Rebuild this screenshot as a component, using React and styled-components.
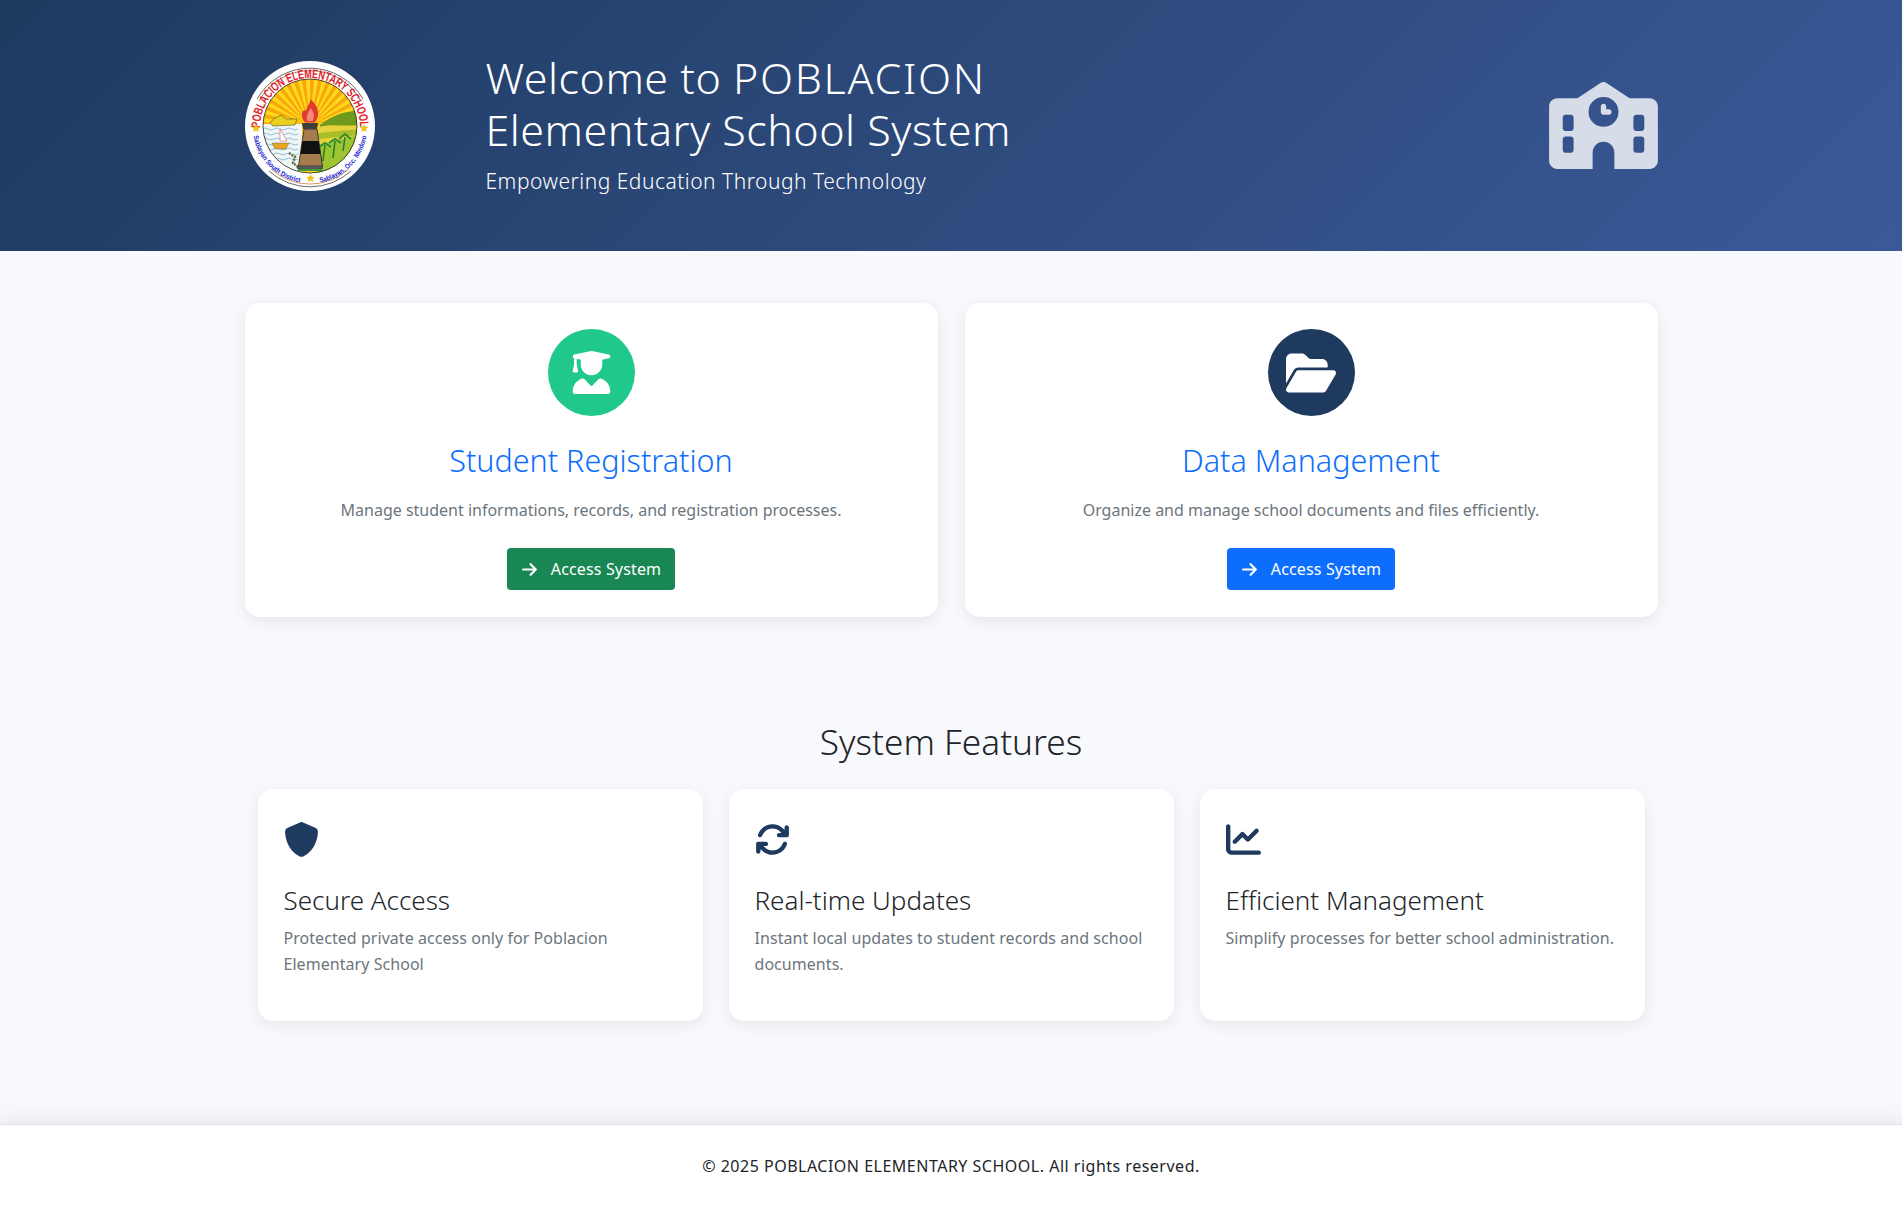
import React from 'react';
import styled, { createGlobalStyle } from 'styled-components';
import { FaSchool, FaUserGraduate, FaFolderOpen, FaArrowRight, FaShield, FaArrowsRotate, FaChartLine } from 'react-icons/fa6';

const GlobalStyle = createGlobalStyle`
  * { box-sizing: border-box; }
  body {
    margin: 0;
    background: #f8f9fc;
    color: #212529;
    font-family: "Noto Sans", "Open Sans", sans-serif;
    font-size: 16px;
    line-height: 1.6;
  }
`;

const Page = styled.div`
  min-height: 100vh;
  display: flex;
  flex-direction: column;
`;

const Header = styled.header`
  height: 251px;
  background: linear-gradient(135deg, #1e3a5f, #3b5998);
  color: #fff;
  display: flex;
  justify-content: center;
  align-items: center;
`;

const HeaderInner = styled.div`
  width: 1413px;
  display: flex;
  align-items: center;
`;

const LogoWrap = styled.div`
  width: 241px;
  flex-shrink: 0;
`;

const Logo = styled.svg`
  display: block;
  width: 130px;
  height: 130px;
`;

const HeaderText = styled.div`
  flex: 1;
`;

const Title = styled.h1`
  margin: 0 0 10px;
  font-size: 43px;
  font-weight: 300;
  line-height: 1.2;
  letter-spacing: 0.5px;
`;

const TitleCaps = styled.span`
  letter-spacing: 1.7px;
`;

const Lead = styled.p`
  margin: 0;
  font-size: 21px;
  font-weight: 300;
  letter-spacing: 0.5px;
`;

const SchoolIcon = styled(FaSchool)`
  width: 109px;
  height: 87px;
  opacity: 0.8;
`;

const Main = styled.main`
  width: 1413px;
  margin: 0 auto;
  padding-top: 52px;
`;

const SystemRow = styled.div`
  display: grid;
  grid-template-columns: 693px 693px;
  gap: 27px;
`;

const SystemCard = styled.section`
  background: #fff;
  border-radius: 15px;
  box-shadow: 0 4px 15px rgba(0, 0, 0, 0.08);
  padding: 26px;
  height: 314px;
  text-align: center;
`;

const IconCircle = styled.div`
  width: 87px;
  height: 87px;
  margin: 0 auto 26px;
  border-radius: 50%;
  background: ${(p) => p.$bg};
  color: #fff;
  display: flex;
  align-items: center;
  justify-content: center;
`;

const CardTitle = styled.h2`
  margin: 0 0 19px;
  font-size: 30.5px;
  font-weight: 300;
  line-height: 1.2;
  color: #0d6efd;
`;

const CardText = styled.p`
  margin: 0 0 25px;
  color: #6c757d;
  font-size: 16px;
`;

const AccessButton = styled.a`
  display: flex;
  width: fit-content;
  margin: 0 auto;
  align-items: center;
  gap: 13px;
  height: 42px;
  padding: 1px 14px 0;
  border-radius: 4px;
  background: ${(p) => p.$bg};
  color: #fff;
  font-size: 16px;
  letter-spacing: 0.15px;
`;

const SectionTitle = styled.h3`
  margin: 103px 0 27px;
  text-align: center;
  font-size: 35.2px;
  font-weight: 300;
  line-height: 1.2;
`;

const FeatureRow = styled.div`
  display: grid;
  grid-template-columns: repeat(3, 445px);
  justify-content: center;
  gap: 26px;
`;

const FeatureCard = styled.section`
  height: 232px;
  padding: 26px;
  background: #fff;
  border-radius: 15px;
  box-shadow: 0 4px 15px rgba(0, 0, 0, 0.08);
`;

const FeatureIcon = styled.div`
  color: #1e3a5f;
  font-size: 35px;
  height: 48px;
  display: flex;
  align-items: center;
  margin-bottom: 22px;
`;

const FeatureTitle = styled.h4`
  margin: 0 0 10px;
  font-size: 26px;
  font-weight: 300;
  line-height: 1.2;
`;

const FeatureText = styled.p`
  margin: 0;
  font-size: 16px;
  color: #6c757d;
  letter-spacing: 0.05px;
`;

const Footer = styled.footer`
  flex: 1;
  margin-top: 103px;
  padding-top: 3px;
  background: #fff;
  border-top: 1px solid #e2e4ea;
  box-shadow: 0 -2px 20px rgba(0, 0, 0, 0.1);
  display: flex;
  align-items: center;
  justify-content: center;
  font-size: 16px;
  letter-spacing: 0.5px;
`;

const rays = Array.from({ length: 18 }, (_, i) => {
  const a = Math.PI + (i * Math.PI) / 18;
  const b = a + Math.PI / 36;
  const p = (t) => `${(65 + 70 * Math.cos(t)).toFixed(1)} ${(65 + 70 * Math.sin(t)).toFixed(1)}`;
  return `M65 65 L${p(a)} L${p(b)} Z`;
});

const waves = [68, 73, 78, 83, 88, 93, 98];

const SchoolLogo = () => (
  <Logo viewBox="0 0 130 130">
    <defs>
      <clipPath id="sceneClip"><circle cx="65" cy="65" r="47" /></clipPath>
    </defs>
    <circle cx="65" cy="65" r="65" fill="#fff" />
    <path d="M14 40 A58 58 0 0 1 116 40" fill="none" stroke="#8a5a3c" strokeWidth="0.8" />
    <path d="M12 38 A61 61 0 0 1 118 38" fill="none" stroke="#444" strokeWidth="0.8" />
    <path d="M26 108 A58 58 0 0 0 104 108" fill="none" stroke="#c9803a" strokeWidth="0.8" />
    <path d="M24 110 A61 61 0 0 0 106 110" fill="none" stroke="#444" strokeWidth="0.8" />
    <g clipPath="url(#sceneClip)">
      <rect x="15" y="15" width="100" height="100" fill="#ffd91a" />
      {rays.map((d) => <path key={d} d={d} fill="#f8a70f" />)}
      <path d="M75 64 C88 54 100 50 114 50 V115 H75 Z" fill="#6f9a1e" />
      <path d="M73 66 C88 62 100 66 114 64 V115 H73 Z" fill="#e6d23a" />
      <path d="M73 72 L114 68 V74 L73 78 Z" fill="#a8bf2a" />
      <path d="M72 84 L114 74 V115 H72 Z" fill="#9cc531" />
      <path d="M78 100 L80 84 M88 97 L90 80 M98 90 L100 76" stroke="#2f7d2a" strokeWidth="1.6" fill="none" />
      <path d="M74 86 L80 82 L86 86 M84 82 L90 78 L96 82 M94 78 L100 73 L106 78" stroke="#2f8f32" strokeWidth="2" fill="none" />
      <rect x="15" y="63" width="42" height="52" fill="#eef5f4" />
      {waves.map((y) => (
        <path key={y} d={`M17 ${y} q3 -2 6 0 t6 0 t6 0 t6 0 t6 0 t6 0`} stroke="#5aa0cf" strokeWidth="0.6" fill="none" />
      ))}
      <path d="M25 62 C28 57 33 56 36 54 L41 58 L52 58 L50 64 L28 65 Z" fill="#e9d01f" stroke="#3a3a1a" strokeWidth="0.5" />
      <path d="M35 68 V80 L42 80 Z" fill="#fff" stroke="#c43" strokeWidth="0.5" />
      <path d="M27 82 H44 L41 88 H30 Z" fill="#e8a51f" stroke="#555" strokeWidth="0.4" />
      <path d="M44 92 L50 96 L48 102 L53 106" stroke="#5d6b3a" strokeWidth="2.4" strokeDasharray="2 1" fill="none" />
    </g>
    <path d="M59 68 H72 L77.5 105 H53.5 Z" fill="#a67c4e" stroke="#222" strokeWidth="0.8" />
    <path d="M57.4 80 H73.6 L75.5 93 H55.5 Z" fill="#111" />
    <path d="M57 62 H73 L72 68 H58 Z" fill="#3d3d3d" />
    <path d="M65.5 38 C73 45 76 53 70 61.5 H60 C54 54 58 47 61 50 C62 45 65 43 65.5 38 Z" fill="#e23a2c" />
    <path d="M65.5 47 C69 51 70 56 67.5 60 H62.5 C60.5 56 63 52 65.5 47 Z" fill="#f58a7a" />
    <rect x="52" y="105" width="26" height="3" fill="#555" />
    <rect x="53" y="108" width="24" height="2" fill="#3a9a3a" />
    <circle cx="65" cy="65" r="47" fill="none" stroke="#222" strokeWidth="0.8" />
    <path id="poblacionArc" d="M15 67 A50 50 0 0 1 115 67" fill="none" />
    <text fontFamily="Liberation Sans, sans-serif" fontSize="12.5" fontWeight="700" fill="#e4202c">
      <textPath href="#poblacionArc" startOffset="0" textLength="156" lengthAdjust="spacingAndGlyphs">POBLACION ELEMENTARY SCHOOL</textPath>
    </text>
    <path id="districtLeftArc" d="M8.500 75 A57.400 57.400 0 0 0 55 121.500" fill="none" />
    <text fontFamily="Liberation Sans, sans-serif" fontSize="7" fontWeight="700" fill="#1a26d0">
      <textPath href="#districtLeftArc" startOffset="0" textLength="70" lengthAdjust="spacingAndGlyphs">Sablayan South District</textPath>
    </text>
    <path id="districtRightArc" d="M75 121.500 A57.400 57.400 0 0 0 121.500 75" fill="none" />
    <text fontFamily="Liberation Sans, sans-serif" fontSize="7" fontWeight="700" fill="#1a26d0">
      <textPath href="#districtRightArc" startOffset="0" textLength="70" lengthAdjust="spacingAndGlyphs">Sablayan, Occ. Mindoro</textPath>
    </text>
    <path d="M11 63 l1.300 2.800 3 .3 -2.200 2 .6 3 -2.700 -1.500 -2.700 1.500 .6 -3 -2.200 -2 3 -.3 Z" fill="#f2c21a" />
    <path d="M119 63 l1.300 2.800 3 .3 -2.200 2 .6 3 -2.700 -1.500 -2.700 1.500 .6 -3 -2.200 -2 3 -.3 Z" fill="#f2c21a" />
    <path d="M65.500 113 l1.300 2.800 3 .3 -2.200 2 .6 3 -2.700 -1.500 -2.700 1.500 .6 -3 -2.200 -2 3 -.3 Z" fill="#f2c21a" />
  </Logo>
);

const systems = [
  { title: 'Student Registration', text: 'Manage student informations, records, and registration processes.', icon: <FaUserGraduate size={43} />, circle: '#20c98b', button: '#198754' },
  { title: 'Data Management', text: 'Organize and manage school documents and files efficiently.', icon: <FaFolderOpen size={50} />, circle: '#1e3a5f', button: '#0d6efd' },
];

const features = [
  { title: 'Secure Access', text: 'Protected private access only for Poblacion Elementary School', icon: <FaShield /> },
  { title: 'Real-time Updates', text: 'Instant local updates to student records and school documents.', icon: <FaArrowsRotate /> },
  { title: 'Efficient Management', text: 'Simplify processes for better school administration.', icon: <FaChartLine /> },
];

export default function App() {
  return (
    <Page>
      <GlobalStyle />
      <Header>
        <HeaderInner>
          <LogoWrap>
            <SchoolLogo />
          </LogoWrap>
          <HeaderText>
            <Title>Welcome to <TitleCaps>POBLACION</TitleCaps><br />Elementary School System</Title>
            <Lead>Empowering Education Through Technology</Lead>
          </HeaderText>
          <SchoolIcon />
        </HeaderInner>
      </Header>
      <Main>
        <SystemRow>
          {systems.map((s) => (
            <SystemCard key={s.title}>
              <IconCircle $bg={s.circle}>{s.icon}</IconCircle>
              <CardTitle>{s.title}</CardTitle>
              <CardText>{s.text}</CardText>
              <AccessButton $bg={s.button}><FaArrowRight size={17} />Access System</AccessButton>
            </SystemCard>
          ))}
        </SystemRow>
        <SectionTitle>System Features</SectionTitle>
        <FeatureRow>
          {features.map((f) => (
            <FeatureCard key={f.title}>
              <FeatureIcon>{f.icon}</FeatureIcon>
              <FeatureTitle>{f.title}</FeatureTitle>
              <FeatureText>{f.text}</FeatureText>
            </FeatureCard>
          ))}
        </FeatureRow>
      </Main>
      <Footer>© 2025 POBLACION ELEMENTARY SCHOOL. All rights reserved.</Footer>
    </Page>
  );
}
